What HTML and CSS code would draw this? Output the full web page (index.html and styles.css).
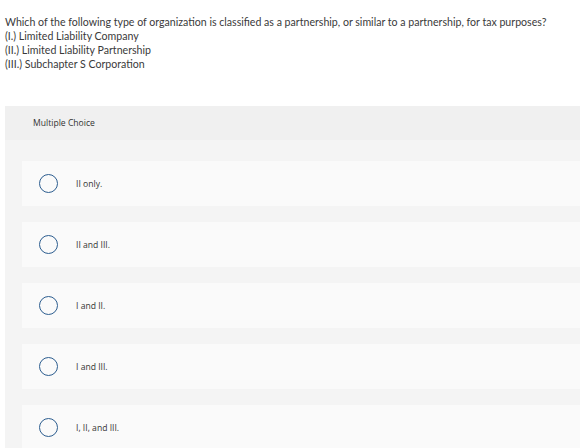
FILE: index.html
```html
<!DOCTYPE html>
<html>
<head>
<meta charset="utf-8">
<link rel="stylesheet" href="styles.css">
</head>
<body>
<div class="question">
  <p>Which of the following type of organization is classified as a partnership, or similar to a partnership, for tax purposes?</p>
  <p>(I.) Limited Liability Company</p>
  <p>(II.) Limited Liability Partnership</p>
  <p>(III.) Subchapter S Corporation</p>
</div>
<div class="panel">
  <div class="panel-head">Multiple Choice</div>
  <div class="panel-body">
    <div class="choice"><span class="radio"></span><span class="label">II only.</span></div>
    <div class="choice"><span class="radio"></span><span class="label">II and III.</span></div>
    <div class="choice"><span class="radio"></span><span class="label">I and II.</span></div>
    <div class="choice"><span class="radio"></span><span class="label">I and III.</span></div>
    <div class="choice"><span class="radio"></span><span class="label">I, II, and III.</span></div>
  </div>
</div>
</body>
</html>
```
FILE: styles.css
```css
html, body {
  margin: 0;
  padding: 0;
  background: #ffffff;
}
body {
  font-family: Lato, "Liberation Sans", sans-serif;
  color: #333333;
  overflow: hidden;
}
.question {
  padding: 15px 0 0 5px;
  font-size: 10.6px;
  line-height: 14px;
  color: #3a3a3a;
}
.question p {
  margin: 0;
}
.panel {
  margin: 35px 0 0 5px;
}
.panel-head {
  height: 34px;
  background: #f0f0f0;
  padding-left: 28px;
  display: flex;
  align-items: center;
  font-family: "Open Sans", Lato, sans-serif;
  font-size: 8.6px;
}
.panel-body {
  background: #f4f4f4;
  padding: 21px 0 0 17px;
  display: flex;
  flex-direction: column;
  gap: 16px;
}
.choice {
  height: 45px;
  background: #fafafa;
  display: flex;
  align-items: center;
  padding-left: 17px;
  gap: 18px;
  font-family: "Open Sans", Lato, sans-serif;
  font-size: 8.6px;
}
.radio {
  width: 17px;
  height: 17px;
  border: 1.5px solid #2c5d8f;
  border-radius: 50%;
  flex: none;
}
```
